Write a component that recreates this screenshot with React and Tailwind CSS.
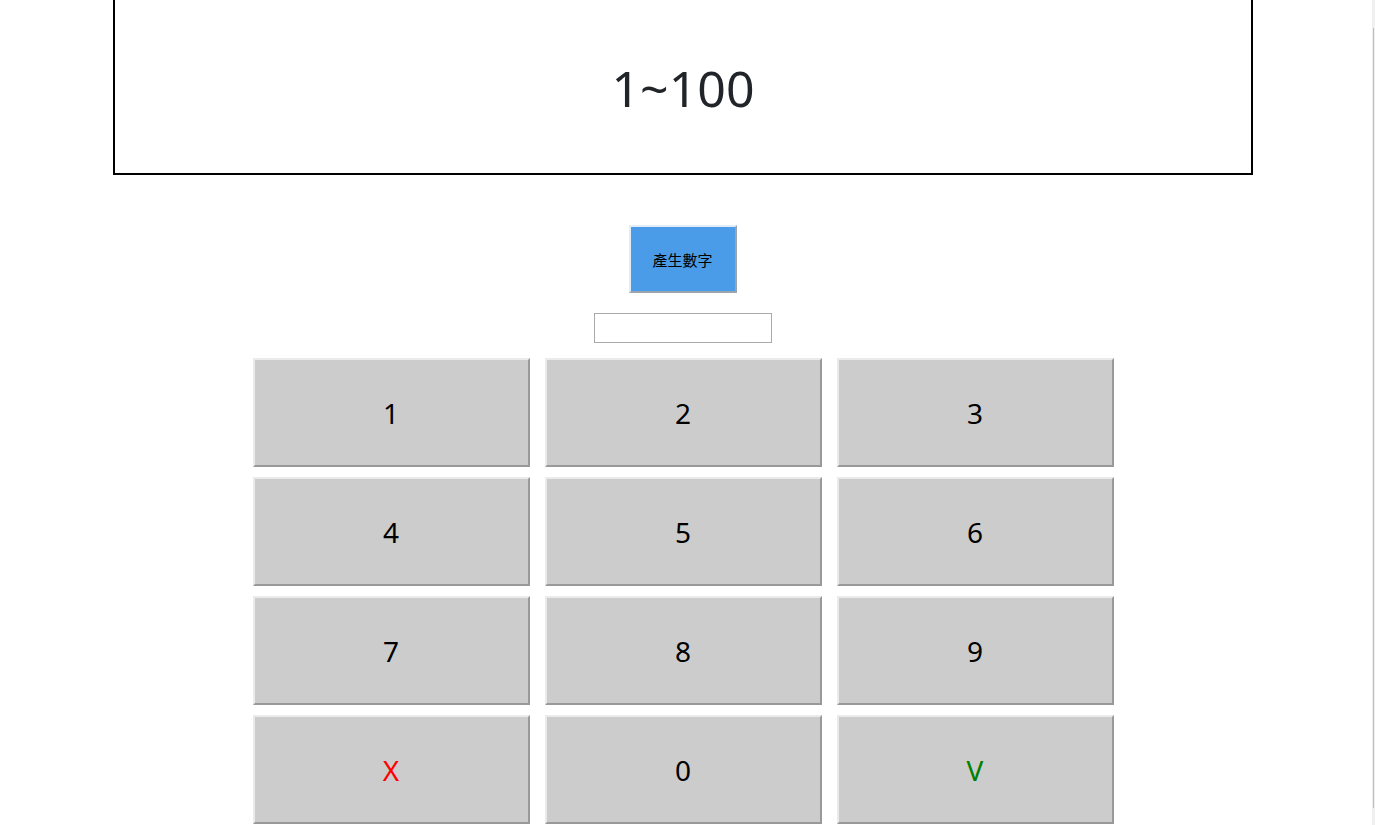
import React, { useState } from "react";

const keys = ["1", "2", "3", "4", "5", "6", "7", "8", "9", "X", "0", "V"];

const App = () => {
    const [value, setValue] = useState("");

    const keyColor = (k) => {
        if (k === "X") return "text-[#ff0000]";
        if (k === "V") return "text-[#008000]";
        return "text-black";
    };

    return (
        <div className="min-h-screen w-full bg-white font-['Noto_Sans','Open_Sans',sans-serif]">
            <div className="w-[1366px] flex flex-col items-center">
                {/* range display */}
                <div className="mt-[-2px] w-[1140px] h-[177px] border-2 border-black flex items-center justify-center">
                    <h1 className="text-[50px] leading-none text-[#212529] pt-[2px]">1~100</h1>
                </div>

                <button className="mt-[50px] ml-[-1px] w-[108px] h-[68px] pt-[2px] bg-[#4a9be8] border-2 border-t-[#e3edf7] border-l-[#e3edf7] border-b-[#9aa4ad] border-r-[#9aa4ad] text-[15px] text-black font-['Noto_Sans_CJK_TC',sans-serif]">
                    產生數字
                </button>

                <input
                    className="mt-[20px] w-[178px] h-[30px] border border-[#aaaaaa] px-1 text-sm outline-none"
                    value={value}
                    onChange={(e) => setValue(e.target.value)}
                />

                <div className="mt-[15px] grid grid-cols-[277px_277px_277px] gap-x-[15px] gap-y-[10px]">
                    {keys.map((k) => (
                        <button
                            key={k}
                            onClick={() => setValue((v) => v + k)}
                            className={`h-[109px] bg-[#cccccc] border-2 border-t-[#ebebeb] border-l-[#ebebeb] border-b-[#999999] border-r-[#999999] text-[28px] leading-none ${keyColor(k)}`}
                        >
                            {k}
                        </button>
                    ))}
                </div>
            </div>

            {/* thin scrollbar */}
            <div className="fixed top-0 right-0 w-[3px] h-full bg-[#f0f0f0] flex flex-col">
                <div className="mt-[28px] mb-[17px] ml-[1px] w-[1px] flex-1 bg-[#bdbdbd]" />
            </div>
        </div>
    );
};

export default App;
